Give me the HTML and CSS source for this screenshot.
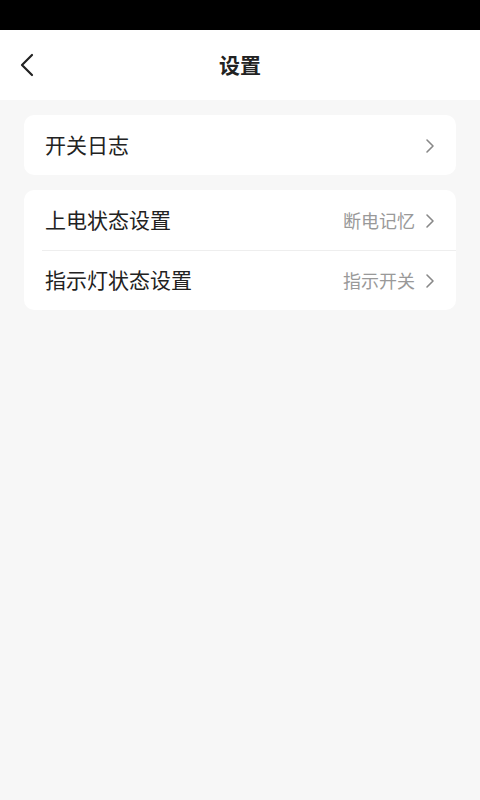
FILE: index.html
```html
<!DOCTYPE html>
<html lang="zh">
<head>
    <meta charset="UTF-8">
    <meta name="viewport" content="width=device-width, initial-scale=1.0">
    <title>设置</title>
    <link rel="stylesheet" href="styles.css">
</head>
<body>

    <div class="status-bar"></div>

    <div class="header">
        <div class="back">
            <svg width="16" height="24" viewBox="0 0 16 24">
                <path d="M13 2 L3 12 L13 22" fill="none" stroke="#222" stroke-width="2.2" stroke-linecap="round" stroke-linejoin="round"/>
            </svg>
        </div>
        <div class="title">设置</div>
    </div>

    <div class="content">
        <div class="card">
            <div class="row">
                <span class="label">开关日志</span>
                <span class="value">
                    <svg class="arrow" width="10" height="16" viewBox="0 0 10 16">
                        <path d="M2 2 L8 8 L2 14" fill="none" stroke="#888" stroke-width="1.6" stroke-linecap="round" stroke-linejoin="round"/>
                    </svg>
                </span>
            </div>
        </div>

        <div class="card">
            <div class="row">
                <span class="label">上电状态设置</span>
                <span class="value">断电记忆
                    <svg class="arrow" width="10" height="16" viewBox="0 0 10 16">
                        <path d="M2 2 L8 8 L2 14" fill="none" stroke="#888" stroke-width="1.6" stroke-linecap="round" stroke-linejoin="round"/>
                    </svg>
                </span>
            </div>
            <div class="row divided">
                <span class="label">指示灯状态设置</span>
                <span class="value">指示开关
                    <svg class="arrow" width="10" height="16" viewBox="0 0 10 16">
                        <path d="M2 2 L8 8 L2 14" fill="none" stroke="#888" stroke-width="1.6" stroke-linecap="round" stroke-linejoin="round"/>
                    </svg>
                </span>
            </div>
        </div>
    </div>

</body>
</html>
```

FILE: styles.css
```css
body {
    margin: 0;
    padding: 0;
    font-family: "Noto Sans CJK SC", "Noto Sans", sans-serif;
    background-color: #f7f7f7;
    color: #222222;
    height: 100vh;
}

.status-bar {
    height: 30px;
    background-color: #000000;
}

.header {
    height: 70px;
    background-color: #ffffff;
    display: flex;
    align-items: center;
    justify-content: center;
    position: relative;
}

.back {
    position: absolute;
    left: 19px;
    top: 23px;
    display: flex;
}

.title {
    font-size: 21px;
    font-weight: bold;
    color: #222222;
    margin-bottom: 3px;
}

.content {
    padding: 15px 24px;
    display: flex;
    flex-direction: column;
    gap: 15px;
}

.card {
    background-color: #ffffff;
    border-radius: 10px;
    overflow: hidden;
}

.row {
    height: 60px;
    display: flex;
    align-items: center;
    justify-content: space-between;
    padding: 0 21px;
    position: relative;
}

/* divider starts a bit in from the card edge */
.row.divided::before {
    content: "";
    position: absolute;
    top: 0;
    left: 18px;
    right: 0;
    border-top: 1px solid #eeeeee;
}

.label {
    font-size: 21px;
    margin-bottom: 3px;
}

.value {
    font-size: 18px;
    color: #999999;
    display: flex;
    align-items: center;
    gap: 10px;
}

.arrow {
    display: block;
    margin-top: 2px;
}
```
